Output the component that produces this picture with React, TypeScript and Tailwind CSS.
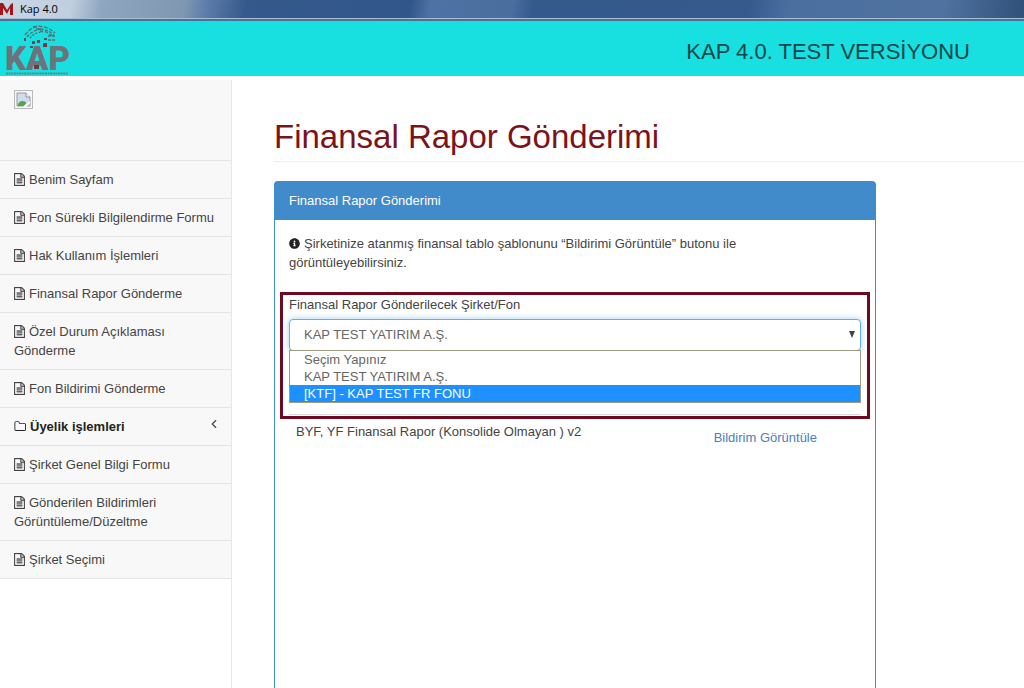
import { useState } from "react";
import { ChevronLeft } from "lucide-react";
import { FaInfoCircle } from "react-icons/fa";

type MenuItem = {
  label: string;
  folder?: boolean;
};

const menuItems: MenuItem[] = [
  { label: "Benim Sayfam" },
  { label: "Fon Sürekli Bilgilendirme Formu" },
  { label: "Hak Kullanım İşlemleri" },
  { label: "Finansal Rapor Gönderme" },
  { label: "Özel Durum Açıklaması Gönderme" },
  { label: "Fon Bildirimi Gönderme" },
  { label: "Üyelik işlemleri", folder: true },
  { label: "Şirket Genel Bilgi Formu" },
  { label: "Gönderilen Bildirimleri Görüntüleme/Düzeltme" },
  { label: "Şirket Seçimi" },
];

const companies = ["Seçim Yapınız", "KAP TEST YATIRIM A.Ş.", "[KTF] - KAP TEST FR FONU"];

function FileIcon() {
  return (
    <svg viewBox="0 0 1536 1792" className="mr-1 inline-block h-[13px] w-[11px] align-[-2px]" fill="currentColor" stroke="currentColor" strokeWidth="40" aria-hidden="true">
      <path d="M1468 380q28 28 48 76t20 88v1152q0 40-28 68t-68 28h-1344q-40 0-68-28t-28-68v-1600q0-40 28-68t68-28h896q40 0 88 20t76 48zm-444-244v376h376q-10-29-22-41l-313-313q-12-12-41-22zm384 1528v-1024h-416q-40 0-68-28t-28-68v-416h-768v1536h1280zm-1024-864q0-14 9-23t23-9h704q14 0 23 9t9 23v64q0 14-9 23t-23 9h-704q-14 0-23-9t-9-23v-64zm736 224q14 0 23 9t9 23v64q0 14-9 23t-23 9h-704q-14 0-23-9t-9-23v-64q0-14 9-23t23-9h704zm0 256q14 0 23 9t9 23v64q0 14-9 23t-23 9h-704q-14 0-23-9t-9-23v-64q0-14 9-23t23-9h704z" />
    </svg>
  );
}

function FolderIcon() {
  return (
    <svg viewBox="0 0 1728 1792" className="mr-1 inline-block h-[13px] w-[12px] align-[-2px]" fill="currentColor" aria-hidden="true">
      <path d="M1600 1312v-704q0-40-28-68t-68-28h-704q-40 0-68-28t-28-68v-64q0-40-28-68t-68-28h-320q-40 0-68 28t-28 68v960q0 40 28 68t68 28h1216q40 0 68-28t28-68zm128-704v704q0 92-66 158t-158 66h-1216q-92 0-158-66t-66-158v-960q0-92 66-158t158-66h320q92 0 158 66t66 158v32h672q92 0 158 66t66 158z" />
    </svg>
  );
}

function KapLogo() {
  return (
    <svg width="70" height="54" viewBox="0 0 70 54" className="overflow-visible" role="img" aria-label="KAP">
      <g fill="none" stroke="#4d6f70" strokeWidth="1.3">
        <path d="M23 13q5-7 13-9" strokeDasharray="4 1.5" />
        <path d="M25 15q6-7 14-8" strokeDasharray="3 1.5" />
        <path d="M28 16q5-6 13-6" strokeDasharray="2 1.5" />
        <path d="M31 5q12-3 22 6" strokeDasharray="4 1.5" />
        <path d="M34 7q10-1 18 6" strokeDasharray="3 1.5" />
        <path d="M38 9q7 0 12 5" strokeDasharray="3 2" />
        <path d="M46 14h7M46 18h8" strokeDasharray="3 1" />
      </g>
      <text x="3" y="48" fontFamily="Roboto, sans-serif" fontWeight="900" fontSize="33" fill="#6c737b">
        KAP
      </text>
      <g fill="#6c4a5e">
        <rect x="22" y="16" width="2" height="3" />
        <rect x="30" y="19" width="3" height="3" />
        <rect x="35" y="18" width="3" height="3" />
        <rect x="28" y="24" width="3" height="2" />
        <rect x="42" y="16" width="3" height="2" />
      </g>
      <g fill="#7c3438">
        <rect x="41" y="21" width="4" height="4" />
        <rect x="32" y="43" width="5" height="4" />
      </g>
      <path d="M4 51.5h62" stroke="#4d8f92" strokeWidth="2" strokeDasharray="2 .6" />
    </svg>
  );
}

function BrokenImage() {
  return (
    <svg width="19" height="19" viewBox="0 0 19 19" role="img" aria-label="Logo">
      <rect x=".5" y=".5" width="18" height="18" fill="#f7f7f7" stroke="#b9b9b9" />
      <path d="M3 3h9l4 4v9H3z" fill="#cfdcf3" stroke="#9a9a9a" />
      <path d="M12 3v4h4" fill="#fff" stroke="#8a8a8a" />
      <path d="M3.5 16q1-5 5-5 3 0 4 2l-3 3z" fill="#57a548" />
      <path d="M9 17l7-6v2l-4 4z" fill="#fff" />
    </svg>
  );
}

function WindowTitle() {
  return (
    <div className="flex h-[21px] flex-col bg-[linear-gradient(100deg,#c9d6e4_0%,#c0cfdf_7%,#8fa6c0_10%,#7f97b0_18%,#5f7fae_20%,#35598a_24%,#31568a_40%,#4e72a3_42%,#4a6e9e_50%,#34598b_52%,#365a8c_73%,#4b6f9f_77%,#4f72a0_92%,#2f5078_100%)] font-['Open_Sans',sans-serif] text-[11px] text-black">
      <div className="flex flex-1 items-center gap-1.5">
        <svg width="14" height="14" viewBox="0 0 14 14" aria-hidden="true">
          <path d="M0 1l3 0 4 7 4-6 2-1v12h-3V6l-3 6-4-6v7H0z" fill="#a3161b" />
        </svg>
        <span className="leading-4">Kap 4.0</span>
      </div>
      <div className="h-[3px] border-t border-[#a9bdd0] bg-[#45749a]" />
    </div>
  );
}

function Sidebar() {
  return (
    <aside className="w-[232px] shrink-0 border-r border-[#e7e7e7]">
      <div className="h-20 bg-[#f8f8f8] px-3.5 pt-2.5">
        <BrokenImage />
      </div>
      <nav className="border-t border-[#e4e4e4]">
        <ul>
          {menuItems.map((item) => (
            <li key={item.label} className="border-b border-[#e4e4e4] bg-[#f8f8f8]">
              <a href="#" className="flex justify-between px-3.5 py-[9px] leading-[19px]">
                <span className={item.folder ? "font-bold text-[#222222]" : ""}>
                  {item.folder ? <FolderIcon /> : <FileIcon />}
                  {item.label}
                </span>
                {item.folder && <ChevronLeft className="-mr-1 h-3.5 w-3.5" strokeWidth={2} />}
              </a>
            </li>
          ))}
        </ul>
      </nav>
    </aside>
  );
}

function CompanySelect() {
  const [company, setCompany] = useState(companies[1]);
  const [active, setActive] = useState(companies[2]);

  return (
    <div className="relative">
      <select
        id="company"
        value={company}
        onChange={(e) => setCompany(e.target.value)}
        className="block h-8 w-full appearance-none rounded-sm border border-[#66afe9] bg-white px-3.5 text-[#666666] shadow-[0_0_6px_rgba(102,175,233,0.6)] outline-none">
        {companies.map((name) => (
          <option key={name}>{name}</option>
        ))}
      </select>
      <svg width="6" height="7" viewBox="0 0 6 7" className="pointer-events-none absolute top-3 right-1.5" aria-hidden="true">
        <path d="M0 0h6L3 7z" fill="#444444" />
      </svg>
      <ul role="listbox" aria-label="Şirket/Fon" className="absolute inset-x-0 top-[31px] z-10 border border-[#9c9c80] bg-white text-[#666666]">
        {companies.map((name) => (
          <li
            key={name}
            role="option"
            aria-selected={name === active}
            onMouseEnter={() => setActive(name)}
            onClick={() => setCompany(name)}
            className={name === active ? "bg-[#1e90ff] px-3.5 leading-[17px] text-white" : "px-3.5 leading-[17px]"}>
            {name}
          </li>
        ))}
      </ul>
    </div>
  );
}

export default function App() {
  return (
    <div className="flex min-h-screen flex-col bg-white font-['Liberation_Sans',Arial,sans-serif] text-[13px] text-[#444444]">
      <WindowTitle />
      <header className="flex h-[55px] items-center justify-between bg-[#19e0e0] pr-[54px]">
        <a href="#" className="pl-0.5">
          <KapLogo />
        </a>
        <p className="pt-1.5 text-[22px] text-[#14474b]">KAP 4.0. TEST VERSİYONU</p>
      </header>
      <div className="flex flex-1 pt-1">
        <Sidebar />
        <main className="flex min-w-0 flex-1 flex-col pl-[42px]">
          <h1 className="border-b border-[#eeeeee] pt-[38px] pb-1.5 text-[33px] leading-[37px] text-[#7b1318]">Finansal Rapor Gönderimi</h1>
          <section className="mt-[19px] flex w-full max-w-[602px] flex-1 flex-col rounded-t border-x border-t border-[#428bca]">
            <h2 className="bg-[#428bca] px-3.5 py-[9px] leading-5 text-white">Finansal Rapor Gönderimi</h2>
            <div className="px-3.5 pt-3.5">
              <p className="max-w-[480px] leading-[19px]">
                <FaInfoCircle className="mr-1 inline-block h-[11px] w-[11px] align-[-1px] text-[#222222]" />
                Şirketinize atanmış finansal tablo şablonunu “Bildirimi Görüntüle” butonu ile görüntüleyebilirsiniz.
              </p>
              <div className="-mx-[9px] mt-5 border-3 border-[#6d0a22] px-1.5">
                <label htmlFor="company" className="block pb-[5px] leading-[19px]">
                  Finansal Rapor Gönderilecek Şirket/Fon
                </label>
                <CompanySelect />
                <hr className="mt-[63px] mb-px border-[#dddddd]" />
              </div>
              <div className="flex justify-between pt-[3px] pr-11 pl-[7px] leading-[19px]">
                <span>BYF, YF Finansal Rapor (Konsolide Olmayan ) v2</span>
                <a href="#" className="pt-1.5 text-[#4a80bd]">
                  Bildirim Görüntüle
                </a>
              </div>
            </div>
          </section>
        </main>
      </div>
    </div>
  );
}
